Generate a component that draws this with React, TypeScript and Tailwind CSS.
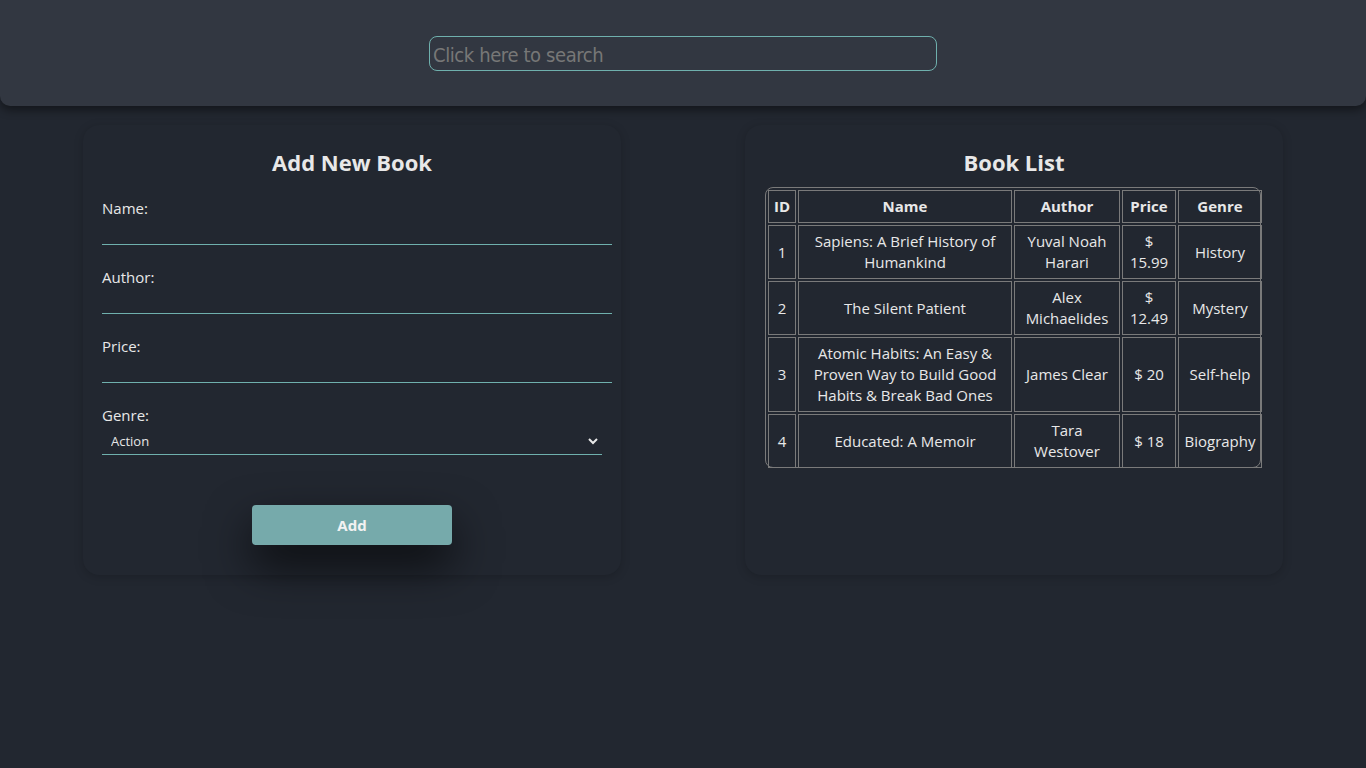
const books = [
  { id: 1, name: 'Sapiens: A Brief History of Humankind', author: 'Yuval Noah Harari', price: '15.99', genre: 'History' },
  { id: 2, name: 'The Silent Patient', author: 'Alex Michaelides', price: '12.49', genre: 'Mystery' },
  { id: 3, name: 'Atomic Habits: An Easy & Proven Way to Build Good Habits & Break Bad Ones', author: 'James Clear', price: '20', genre: 'Self-help' },
  { id: 4, name: 'Educated: A Memoir', author: 'Tara Westover', price: '18', genre: 'Biography' },
];

const fields = ['Name', 'Author', 'Price'];

function Field({ label }: { label: string }) {
  return (
    <div className="flex flex-col mb-[22px]">
      <label className="text-[15px] leading-[21px]">{label}:</label>
      <input
        type="text"
        className="w-[510px] h-[26px] bg-transparent border-b border-[#6fb0ad] outline-none text-[15px] text-[#e6e6e6]"
      />
    </div>
  );
}

export default function App() {
  return (
    <div className="min-h-[768px] bg-[#222730] text-[#e8e8e8] font-['Open_Sans',sans-serif]">
      <header className="h-[106px] bg-[#323741] rounded-b-[10px] shadow-[0_4px_10px_rgba(0,0,0,0.45)] flex items-center justify-center">
        <input
          type="text"
          placeholder="Click here to search"
          className="w-[508px] h-[35px] px-[3px] pt-[3px] rounded-lg border border-[#6fb0ad] bg-transparent outline-none text-[20px] text-[#e6e6e6] placeholder:text-[#777777] font-['DejaVu_Sans_Condensed','DejaVu_Sans',sans-serif] tracking-[-0.4px]"
        />
      </header>

      <main className="flex justify-between px-[83px] pt-[19px]">
        {/* form */}
        <section className="w-[538px] h-[450px] rounded-2xl bg-[#222730] shadow-[0_2px_10px_rgba(0,0,0,0.18)] pt-[21px] px-[19px]">
          <h2 className="text-center text-[22px] font-bold leading-[32px] mb-[20px]">Add New Book</h2>
          {fields.map((f) => (
            <Field key={f} label={f} />
          ))}
          <div className="flex flex-col">
            <label className="text-[15px] leading-[21px]">Genre:</label>
            <div className="relative w-[500px] mt-[2px]">
              <select className="appearance-none w-full h-[26px] pl-[9px] bg-transparent border-b border-[#6fb0ad] outline-none text-[13px] text-[#e6e6e6]">
                <option className="bg-[#222730]">Action</option>
                <option className="bg-[#222730]">History</option>
                <option className="bg-[#222730]">Mystery</option>
                <option className="bg-[#222730]">Self-help</option>
                <option className="bg-[#222730]">Biography</option>
              </select>
              <svg
                className="absolute right-[4px] top-[10px] pointer-events-none"
                width="10"
                height="7"
                viewBox="0 0 10 7"
                fill="none"
                stroke="#e8e8e8"
                strokeWidth="2"
              >
                <path d="M1 1l4 4 4-4" />
              </svg>
            </div>
          </div>
          <div className="flex justify-center mt-[50px]">
            <button className="w-[200px] h-[40px] rounded bg-[#76aaab] text-[15px] font-bold text-[#f2f2f2] shadow-[0_20px_45px_rgba(0,0,0,0.7)]">
              Add
            </button>
          </div>
        </section>

        {/* list */}
        <section className="w-[538px] h-[450px] rounded-2xl bg-[#222730] shadow-[0_2px_10px_rgba(0,0,0,0.18)] pt-[21px] px-[20px]">
          <h2 className="text-center text-[22px] font-bold leading-[32px] mb-[9px]">Book List</h2>
          <div className="w-[496px] border border-[#7a7a7a] rounded-lg">
            <table className="table-fixed w-[498px] -mr-[3px] -mb-[3px] border-separate border-spacing-[2px] text-[15px] leading-[21px] text-center">
              <colgroup>
                <col className="w-[28px]" />
                <col className="w-[214px]" />
                <col className="w-[106px]" />
                <col className="w-[54px]" />
                <col className="w-[84px]" />
              </colgroup>
              <thead>
                <tr>
                  {['ID', 'Name', 'Author', 'Price', 'Genre'].map((h) => (
                    <th key={h} className="border border-[#7a7a7a] py-[5px] px-[2px] font-bold">
                      {h}
                    </th>
                  ))}
                </tr>
              </thead>
              <tbody>
                {books.map((b) => (
                  <tr key={b.id}>
                    <td className="border border-[#7a7a7a] py-[5px] px-[2px]">{b.id}</td>
                    <td className="border border-[#7a7a7a] py-[5px] px-[4px]">{b.name}</td>
                    <td className="border border-[#7a7a7a] py-[5px] px-[4px]">{b.author}</td>
                    <td className="border border-[#7a7a7a] py-[5px] px-[4px]">$ {b.price}</td>
                    <td className="border border-[#7a7a7a] py-[5px] px-[2px]">{b.genre}</td>
                  </tr>
                ))}
              </tbody>
            </table>
          </div>
        </section>
      </main>
    </div>
  );
}
